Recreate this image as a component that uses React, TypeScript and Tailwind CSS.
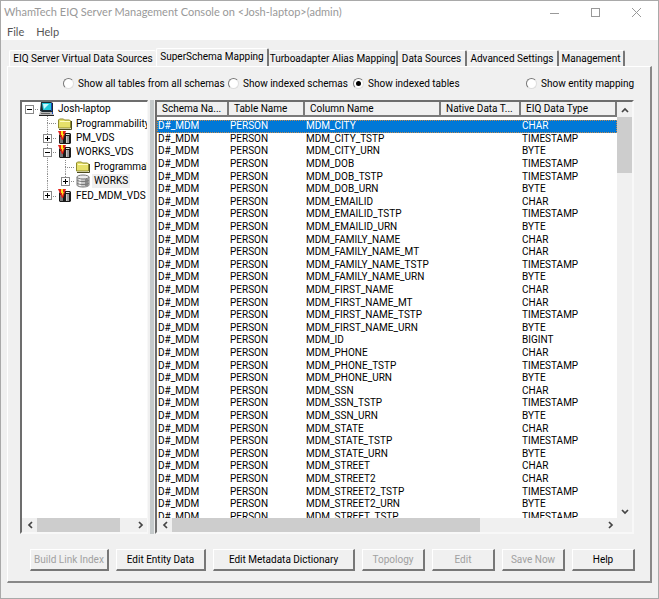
import { useState, type ReactNode } from "react";
import clsx from "clsx";

const menuItems = ["File", "Help"];

const tabs = [
  { label: "EIQ Server Virtual Data Sources", width: "w-[147px]" },
  { label: "SuperSchema Mapping", width: "w-[113px]" },
  { label: "Turboadapter Alias Mapping", width: "w-[129px]" },
  { label: "Data Sources", width: "w-[69px]" },
  { label: "Advanced Settings", width: "w-[92px]" },
  { label: "Management", width: "w-[66px]" },
];

const filters = [
  { label: "Show all tables from all schemas", width: "w-[165px]" },
  { label: "Show indexed schemas", width: "w-[125px]" },
  { label: "Show indexed tables", width: "w-[112px]" },
  { label: "Show entity mapping", width: "ml-auto w-[107px]" },
];

const columns = [
  { label: "Schema Na...", width: "w-[72px]" },
  { label: "Table Name", width: "w-[76px]" },
  { label: "Column Name", width: "w-[136px]" },
  { label: "Native Data T...", width: "w-[80px]" },
  { label: "EIQ Data Type", width: "" },
];

const rows = [
  ["MDM_CITY", "CHAR"],
  ["MDM_CITY_TSTP", "TIMESTAMP"],
  ["MDM_CITY_URN", "BYTE"],
  ["MDM_DOB", "TIMESTAMP"],
  ["MDM_DOB_TSTP", "TIMESTAMP"],
  ["MDM_DOB_URN", "BYTE"],
  ["MDM_EMAILID", "CHAR"],
  ["MDM_EMAILID_TSTP", "TIMESTAMP"],
  ["MDM_EMAILID_URN", "BYTE"],
  ["MDM_FAMILY_NAME", "CHAR"],
  ["MDM_FAMILY_NAME_MT", "CHAR"],
  ["MDM_FAMILY_NAME_TSTP", "TIMESTAMP"],
  ["MDM_FAMILY_NAME_URN", "BYTE"],
  ["MDM_FIRST_NAME", "CHAR"],
  ["MDM_FIRST_NAME_MT", "CHAR"],
  ["MDM_FIRST_NAME_TSTP", "TIMESTAMP"],
  ["MDM_FIRST_NAME_URN", "BYTE"],
  ["MDM_ID", "BIGINT"],
  ["MDM_PHONE", "CHAR"],
  ["MDM_PHONE_TSTP", "TIMESTAMP"],
  ["MDM_PHONE_URN", "BYTE"],
  ["MDM_SSN", "CHAR"],
  ["MDM_SSN_TSTP", "TIMESTAMP"],
  ["MDM_SSN_URN", "BYTE"],
  ["MDM_STATE", "CHAR"],
  ["MDM_STATE_TSTP", "TIMESTAMP"],
  ["MDM_STATE_URN", "BYTE"],
  ["MDM_STREET", "CHAR"],
  ["MDM_STREET2", "CHAR"],
  ["MDM_STREET2_TSTP", "TIMESTAMP"],
  ["MDM_STREET2_URN", "BYTE"],
  ["MDM_STREET_TSTP", "TIMESTAMP"],
];

const actions = [
  { label: "Build Link Index", size: "flex-76", disabled: true },
  { label: "Edit Entity Data", size: "flex-87", disabled: false },
  { label: "Edit Metadata Dictionary", size: "flex-139", disabled: false },
  { label: "Topology", size: "flex-60", disabled: true },
  { label: "Edit", size: "flex-60", disabled: true },
  { label: "Save Now", size: "flex-60", disabled: true },
  { label: "Help", size: "flex-60", disabled: false },
];

const ComputerIcon = () => (
  <svg width="16" height="15" viewBox="0 0 16 15">
    <path d="M2 0h10l2 1v9H3L1 9z" fill="#1c2a33" />
    <path d="M3 1h9v7H4z" fill="#22c9dc" />
    <path d="M4 2h6L5 7z" fill="#c8f8ff" />
    <path d="M12 1h1v8h-1z" fill="#1749b8" />
    <path d="M1 10h12l2 3v1H0v-1z" fill="#b9b9b9" />
    <path d="M0 13h15v1H0z" fill="#222" />
    <path d="M2 11h9v1H2z" fill="#666" />
    <path d="M13 10h1v2h-1z" fill="#1749b8" />
  </svg>
);

const FolderIcon = () => (
  <svg width="14" height="12" viewBox="0 0 14 12">
    <path d="M.5 10V2l1-1h4l1 1h5l1 1v7z" fill="#e6e06a" stroke="#8f8b2c" />
    <path d="M2 3.500h10" stroke="#fffcc0" />
    <path d="M1 11.500h12.500V3" fill="none" stroke="#4b4a20" />
  </svg>
);

const VdsIcon = () => (
  <svg width="14" height="14" viewBox="0 0 14 14">
    <path d="M1 4l2-2h9l1 1v9l-1 1H2l-1-1z" fill="#1a1a1a" />
    <path d="M2 6h3v6H2z" fill="#777" />
    <path d="M8 5h3v7H8z" fill="#999" />
    <path d="M8 5h1v7H8z" fill="#ccc" />
    <path d="M8 3h4l-1 1H8z" fill="#e8e8e8" />
    <path d="M0 0h8L5 9H4z" fill="#e3201b" />
    <path d="M3 0h2v3h1L4 7V4H3z" fill="#ffe21a" />
  </svg>
);

const DatabaseIcon = () => (
  <svg width="14" height="14" viewBox="0 0 14 14">
    <path d="M1 3v8c0 1 2 2 6 2s6-1 6-2V3" fill="#c9c9c9" stroke="#777" />
    <path d="M9 5h3v7H9z" fill="#8d8d8d" />
    <path d="M3 5h2v7H3z" fill="#f4f4f4" />
    <ellipse cx="7" cy="3" rx="6" ry="2" fill="#ededed" stroke="#777" />
    <path d="M1 6c1 2 11 2 12 0M1 9c1 2 11 2 12 0" fill="none" stroke="#777" />
  </svg>
);

interface BranchProps {
  up?: boolean;
  down?: boolean;
  right?: boolean;
  toggle?: "open" | "closed";
}

// one 18px wide cell of the tree's dotted guide lines
const Branch = ({ up, down, right, toggle }: BranchProps) => (
  <span className="grid h-full w-[18px] shrink-0 place-items-center *:col-start-1 *:row-start-1">
    <svg
      width="18"
      height="100%"
      className="h-full"
      stroke="#8a8a8a"
      strokeDasharray="1 1"
    >
      {up && <line x1="9.5" y1="0" x2="9.5" y2="50%" />}
      {down && <line x1="9.5" y1="50%" x2="9.5" y2="100%" />}
      {right && <line x1="9" y1="7.5" x2="18" y2="7.5" />}
    </svg>
    {toggle && (
      <button
        aria-label={toggle === "open" ? "Collapse" : "Expand"}
        className="size-[9px]"
      >
        <svg width="9" height="9" viewBox="0 0 9 9">
          <rect x=".5" y=".5" width="8" height="8" fill="#fff" stroke="#888" />
          <path
            d={toggle === "open" ? "M2 4.5h5" : "M2 4.5h5M4.5 2v5"}
            stroke="#000"
          />
        </svg>
      </button>
    )}
  </span>
);

interface TreeRowProps {
  label: string;
  icon: ReactNode;
  branches: BranchProps[];
  selected?: boolean;
}

const TreeRow = ({ label, icon, branches, selected }: TreeRowProps) => (
  <li role="treeitem" aria-selected={!!selected} className="flex items-center">
    {branches.map((branch, idx) => (
      <Branch key={idx} {...branch} />
    ))}
    <span className="flex w-[18px] shrink-0 justify-center">{icon}</span>
    <span
      className={clsx(
        "px-[2px] leading-[14px] whitespace-nowrap",
        selected && "bg-[#f0f0f0]"
      )}
    >
      {label}
    </span>
  </li>
);

const chevrons = {
  left: "M6 1L3 4l3 3",
  right: "M3 1l3 3-3 3",
  up: "M1 6l3-3 3 3",
  down: "M1 3l3 3 3-3",
};

const ArrowButton = ({ direction }: { direction: keyof typeof chevrons }) => (
  <button
    aria-label={`Scroll ${direction}`}
    className="grid size-[15px] shrink-0 place-items-center"
  >
    <svg width="8" height="8" viewBox="0 0 8 8">
      <path
        d={chevrons[direction]}
        fill="none"
        stroke="#444"
        strokeWidth="1.7"
      />
    </svg>
  </button>
);

const Tree = () => (
  <div className="flex w-[128px] shrink-0 flex-col border-t-2 border-r border-b-2 border-l-2 border-t-[#6d6d6d] border-r-[#f8f8f8] border-b-[#f8f8f8] border-l-[#6d6d6d] bg-white">
    <ul
      role="tree"
      className="-ml-[2px] grid h-[101px] auto-rows-fr overflow-hidden"
    >
      <TreeRow
        label="Josh-laptop"
        icon={<ComputerIcon />}
        branches={[{ right: true, toggle: "open" }]}
      />
      <TreeRow
        label="Programmability"
        icon={<FolderIcon />}
        branches={[{}, { up: true, down: true, right: true }]}
      />
      <TreeRow
        label="PM_VDS"
        icon={<VdsIcon />}
        branches={[{}, { up: true, down: true, right: true, toggle: "closed" }]}
      />
      <TreeRow
        label="WORKS_VDS"
        icon={<VdsIcon />}
        branches={[{}, { up: true, down: true, right: true, toggle: "open" }]}
      />
      <TreeRow
        label="Programmability"
        icon={<FolderIcon />}
        branches={[
          {},
          { up: true, down: true },
          { up: true, down: true, right: true },
        ]}
      />
      <TreeRow
        label="WORKS"
        icon={<DatabaseIcon />}
        selected
        branches={[
          {},
          { up: true, down: true },
          { up: true, right: true, toggle: "closed" },
        ]}
      />
      <TreeRow
        label="FED_MDM_VDS"
        icon={<VdsIcon />}
        branches={[{}, { up: true, right: true, toggle: "closed" }]}
      />
    </ul>
    <div className="mt-auto flex h-[14px] items-center justify-between bg-[#f0f0f0]">
      <ArrowButton direction="left" />
      <div className="mr-auto h-full w-[83px] bg-[#cdcdcd]" />
      <ArrowButton direction="right" />
    </div>
  </div>
);

const ColumnTable = () => {
  const [selectedRow, setSelectedRow] = useState(0);

  return (
    <div className="flex min-w-0 flex-1 flex-col border-2 border-t-[#6d6d6d] border-r-[#f8f8f8] border-b-[#f8f8f8] border-l-[#6d6d6d] bg-white">
      <div className="flex min-h-0 flex-1">
        <div className="min-w-0 flex-1 overflow-hidden">
          <table className="h-[421px] w-full table-fixed border-collapse">
            <thead>
              <tr className="h-[18px]">
                {columns.map(({ label, width }) => (
                  <th
                    key={label}
                    className={clsx("p-0 align-top font-normal", width)}
                  >
                    <div className="h-[15px] overflow-hidden border-r-2 border-b-2 border-[#7a7a7a] bg-[#f0f0f0] pl-[5px] text-left leading-[14px] whitespace-nowrap">
                      {label}
                    </div>
                  </th>
                ))}
              </tr>
            </thead>
            <tbody>
              {rows.map(([name, type], idx) => (
                <tr
                  key={name}
                  onClick={() => setSelectedRow(idx)}
                  className={clsx(
                    "leading-[12px] whitespace-nowrap *:p-0 *:pl-px",
                    idx === selectedRow &&
                      "bg-[#0078d7] text-white outline-1 -outline-offset-1 outline-dotted outline-[#c08a50]"
                  )}
                >
                  <td>D#_MDM</td>
                  <td>PERSON</td>
                  <td>{name}</td>
                  <td></td>
                  <td>{type}</td>
                </tr>
              ))}
            </tbody>
          </table>
        </div>
        <div className="flex w-[15px] shrink-0 flex-col bg-[#f0f0f0]">
          <ArrowButton direction="up" />
          <div className="h-[56px] bg-[#cdcdcd]" />
          <div className="flex-1" />
          <ArrowButton direction="down" />
        </div>
      </div>
      <div className="flex h-[14px] shrink-0 items-center bg-[#f0f0f0] pr-[15px]">
        <ArrowButton direction="left" />
        <div className="mr-auto h-full w-[67%] bg-[#cdcdcd]" />
        <ArrowButton direction="right" />
      </div>
    </div>
  );
};

const App = () => {
  const [activeTab, setActiveTab] = useState("SuperSchema Mapping");
  const [filter, setFilter] = useState("Show indexed tables");

  return (
    <div className="flex h-screen min-h-[560px] flex-col border border-[#a9a9a9] bg-[#f0f0f0] font-[Roboto,'Liberation_Sans',sans-serif] text-[10px] text-black">
      <header className="bg-white font-[Lato,'Open_Sans',sans-serif] text-[11px]">
        <div className="flex h-[23px] items-center justify-between pr-4 pl-[3px] text-[#999]">
          <h1>WhamTech EIQ Server Management Console on &lt;Josh-laptop&gt;(admin)</h1>
          <div className="flex items-center gap-[31px]">
            <button aria-label="Minimize">
              <svg width="10" height="10" stroke="#999">
                <path d="M0 5.5h9" />
              </svg>
            </button>
            <button aria-label="Maximize">
              <svg width="10" height="10" stroke="#999" fill="none">
                <rect x=".5" y=".5" width="8" height="8" />
              </svg>
            </button>
            <button aria-label="Close">
              <svg width="10" height="10" stroke="#999">
                <path d="M0 0l9 9M9 0L0 9" />
              </svg>
            </button>
          </div>
        </div>
        <nav className="flex h-4 items-center gap-3 pl-[6px] text-[#555]">
          {menuItems.map((item) => (
            <button key={item} className="leading-4">
              {item}
            </button>
          ))}
        </nav>
      </header>

      <div className="flex h-[26px] items-end pl-2" role="tablist">
        {tabs.map(({ label, width }) => (
          <button
            key={label}
            role="tab"
            aria-selected={label === activeTab}
            onClick={() => setActiveTab(label)}
            className={clsx(
              "shrink-0 rounded-t-xs border-t border-white text-center whitespace-nowrap",
              width,
              label === activeTab
                ? "h-[18px] border-r-2 border-l border-r-[#777] pb-[2px] leading-[16px]"
                : "h-[16px] leading-[15px]",
              label !== activeTab &&
                (label === tabs[0].label
                  ? "border-l"
                  : "border-r-2 border-r-[#777]")
            )}
          >
            {label}
          </button>
        ))}
      </div>

      <main className="mr-[6px] mb-[15px] ml-[6px] flex min-h-0 flex-1 flex-col border-t border-r-2 border-b-2 border-l border-t-white border-r-[#888] border-b-[#888] border-l-white">
        <div className="flex h-[33px] shrink-0 items-center pr-[17px] pl-[55px]">
          {filters.map(({ label, width }) => (
            <label
              key={label}
              className={clsx("flex items-center gap-1 whitespace-nowrap", width)}
            >
              <input
                type="radio"
                name="filter"
                checked={filter === label}
                onChange={() => setFilter(label)}
                className="grid size-[11px] shrink-0 appearance-none place-content-center rounded-full border border-t-[#777] border-r-[#ddd] border-b-[#ddd] border-l-[#777] bg-white checked:before:size-[5px] checked:before:rounded-full checked:before:bg-black checked:before:content-['']"
              />
              {label}
            </label>
          ))}
        </div>

        <div className="flex min-h-0 flex-1 pr-4 pl-3">
          <Tree />
          <div className="mr-[1px] ml-[2px] w-1 shrink-0 bg-[#c5cacb]" />
          <ColumnTable />
        </div>

        <div className="flex shrink-0 gap-[7px] pt-[15px] pr-[15px] pb-[10px] pl-[22px]">
          {actions.map(({ label, size, disabled }) => (
            <button
              key={label}
              disabled={disabled}
              className={clsx(
                "h-[22px] min-w-0 border-t border-r-2 border-b-2 border-l border-t-white border-r-[#777] border-b-[#777] border-l-white whitespace-nowrap disabled:text-[#a0a0a0]",
                size
              )}
            >
              {label}
            </button>
          ))}
        </div>
      </main>
    </div>
  );
};

export default App;
